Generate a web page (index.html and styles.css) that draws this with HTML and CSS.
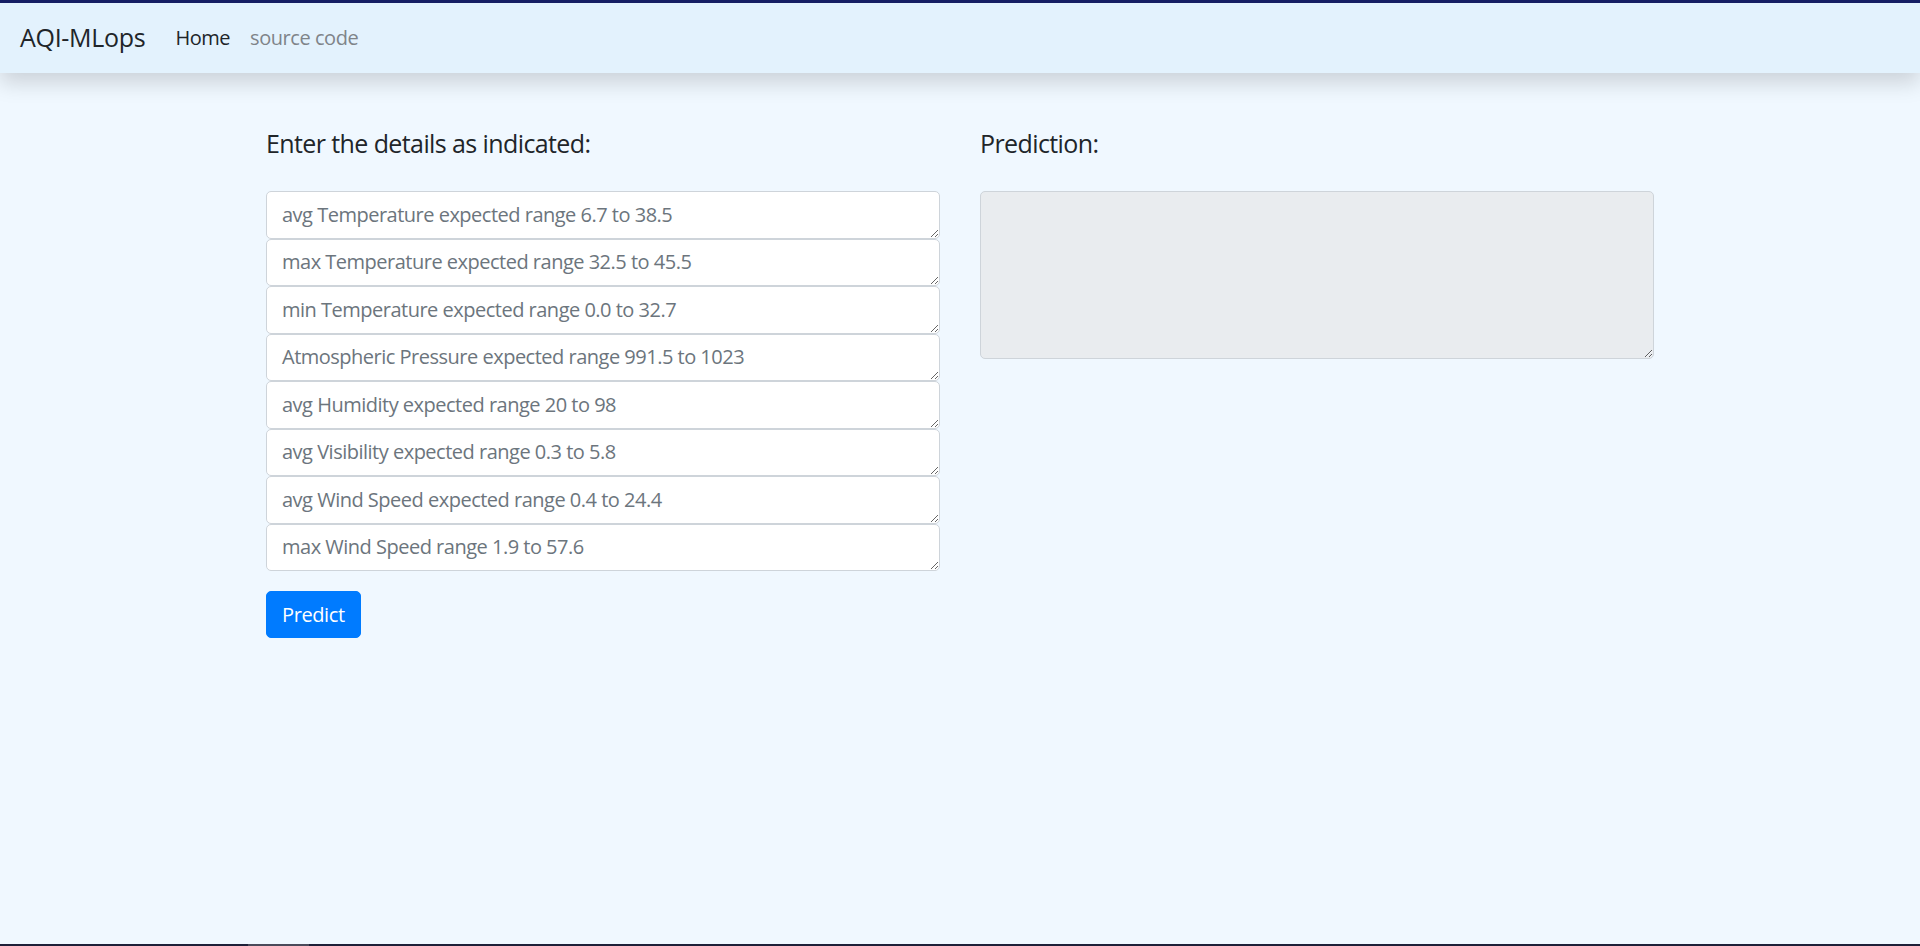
FILE: index.html
```html
<!DOCTYPE html>
<html lang="en">
<head>
<meta charset="utf-8">
<title>AQI-MLops</title>
<link rel="stylesheet" href="styles.css">
</head>
<body>
<div class="topline"></div>
<nav class="navbar">
  <a class="brand" href="#">AQI-MLops</a>
  <ul class="nav">
    <li><a class="nav-link active" href="#">Home</a></li>
    <li><a class="nav-link" href="#">source code</a></li>
  </ul>
</nav>
<main class="container">
  <section class="col">
    <h5 class="title">Enter the details as indicated:</h5>
    <form class="form">
      <textarea class="field" rows="1" placeholder="avg Temperature expected range 6.7 to 38.5"></textarea>
      <textarea class="field" rows="1" placeholder="max Temperature expected range 32.5 to 45.5"></textarea>
      <textarea class="field" rows="1" placeholder="min Temperature expected range 0.0 to 32.7"></textarea>
      <textarea class="field" rows="1" placeholder="Atmospheric Pressure expected range 991.5 to 1023"></textarea>
      <textarea class="field" rows="1" placeholder="avg Humidity expected range 20 to 98"></textarea>
      <textarea class="field" rows="1" placeholder="avg Visibility expected range 0.3 to 5.8"></textarea>
      <textarea class="field" rows="1" placeholder="avg Wind Speed expected range 0.4 to 24.4"></textarea>
      <textarea class="field" rows="1" placeholder="max Wind Speed range 1.9 to 57.6"></textarea>
      <button type="button" class="btn">Predict</button>
    </form>
  </section>
  <section class="col">
    <h5 class="title">Prediction:</h5>
    <textarea class="field result" rows="5" readonly></textarea>
  </section>
</main>
<div class="taskbar"><span class="task"></span></div>
</body>
</html>
```
FILE: styles.css
```css
* { box-sizing: border-box; }
html, body { height: 100%; }
body {
  margin: 0;
  background: #f0f8ff;
  font-family: "Open Sans", "Noto Sans", sans-serif;
  font-size: 20px;
  color: #212529;
  overflow: hidden;
}
.topline { height: 3px; background: #161f66; }
.navbar {
  display: flex;
  align-items: center;
  height: 70px;
  padding: 10px 20px;
  background: #e3f2fd;
  box-shadow: 0 10px 20px rgba(0,0,0,0.15);
  position: relative;
}
.brand {
  font-size: 25px;
  color: #212529;
  text-decoration: none;
  margin-right: 20px;
  line-height: 1.5;
  letter-spacing: -0.3px;
}
.nav { display: flex; list-style: none; margin: 0; padding: 0; }
.nav-link {
  display: block;
  padding: 10px;
  font-size: 20px;
  color: #7f8489;
  text-decoration: none;
  line-height: 1.5;
  letter-spacing: -0.45px;
}
.nav-link.active { color: #212529; }
.container {
  width: 1388px;
  margin: 0 auto;
  display: grid;
  grid-template-columns: 1fr 1fr;
  column-gap: 40px;
  padding-top: 55px;
}
.title {
  margin: 0 0 33px;
  font-size: 25px;
  font-weight: 400;
  line-height: 1.2;
  letter-spacing: -0.6px;
}
.form { display: flex; flex-direction: column; align-items: flex-start; }
.field {
  display: block;
  width: 100%;
  height: 47.5px;
  padding: 7.5px 15px;
  font-family: inherit;
  font-size: 20px;
  line-height: 1.5;
  letter-spacing: -0.5px;
  color: #495057;
  background: #fff;
  border: 1.25px solid #ced4da;
  border-radius: 5px;
  resize: vertical;
}
.field::placeholder { color: #6c757d; opacity: 1; }
.result { height: 167.5px; background: #e9ecef; }
.btn {
  margin-top: 20px;
  padding: 7.5px 15px;
  font-family: inherit;
  font-size: 20px;
  line-height: 1.5;
  letter-spacing: -0.4px;
  color: #fff;
  background: #007bff;
  border: 1.25px solid #007bff;
  border-radius: 5px;
}
.taskbar {
  position: fixed;
  left: 0; right: 0; bottom: 0;
  height: 2px;
  background: #1e2038;
}
.task {
  position: absolute;
  left: 248px;
  width: 61px;
  top: 0; bottom: 0;
  background: #4a4a5a;
}
```
